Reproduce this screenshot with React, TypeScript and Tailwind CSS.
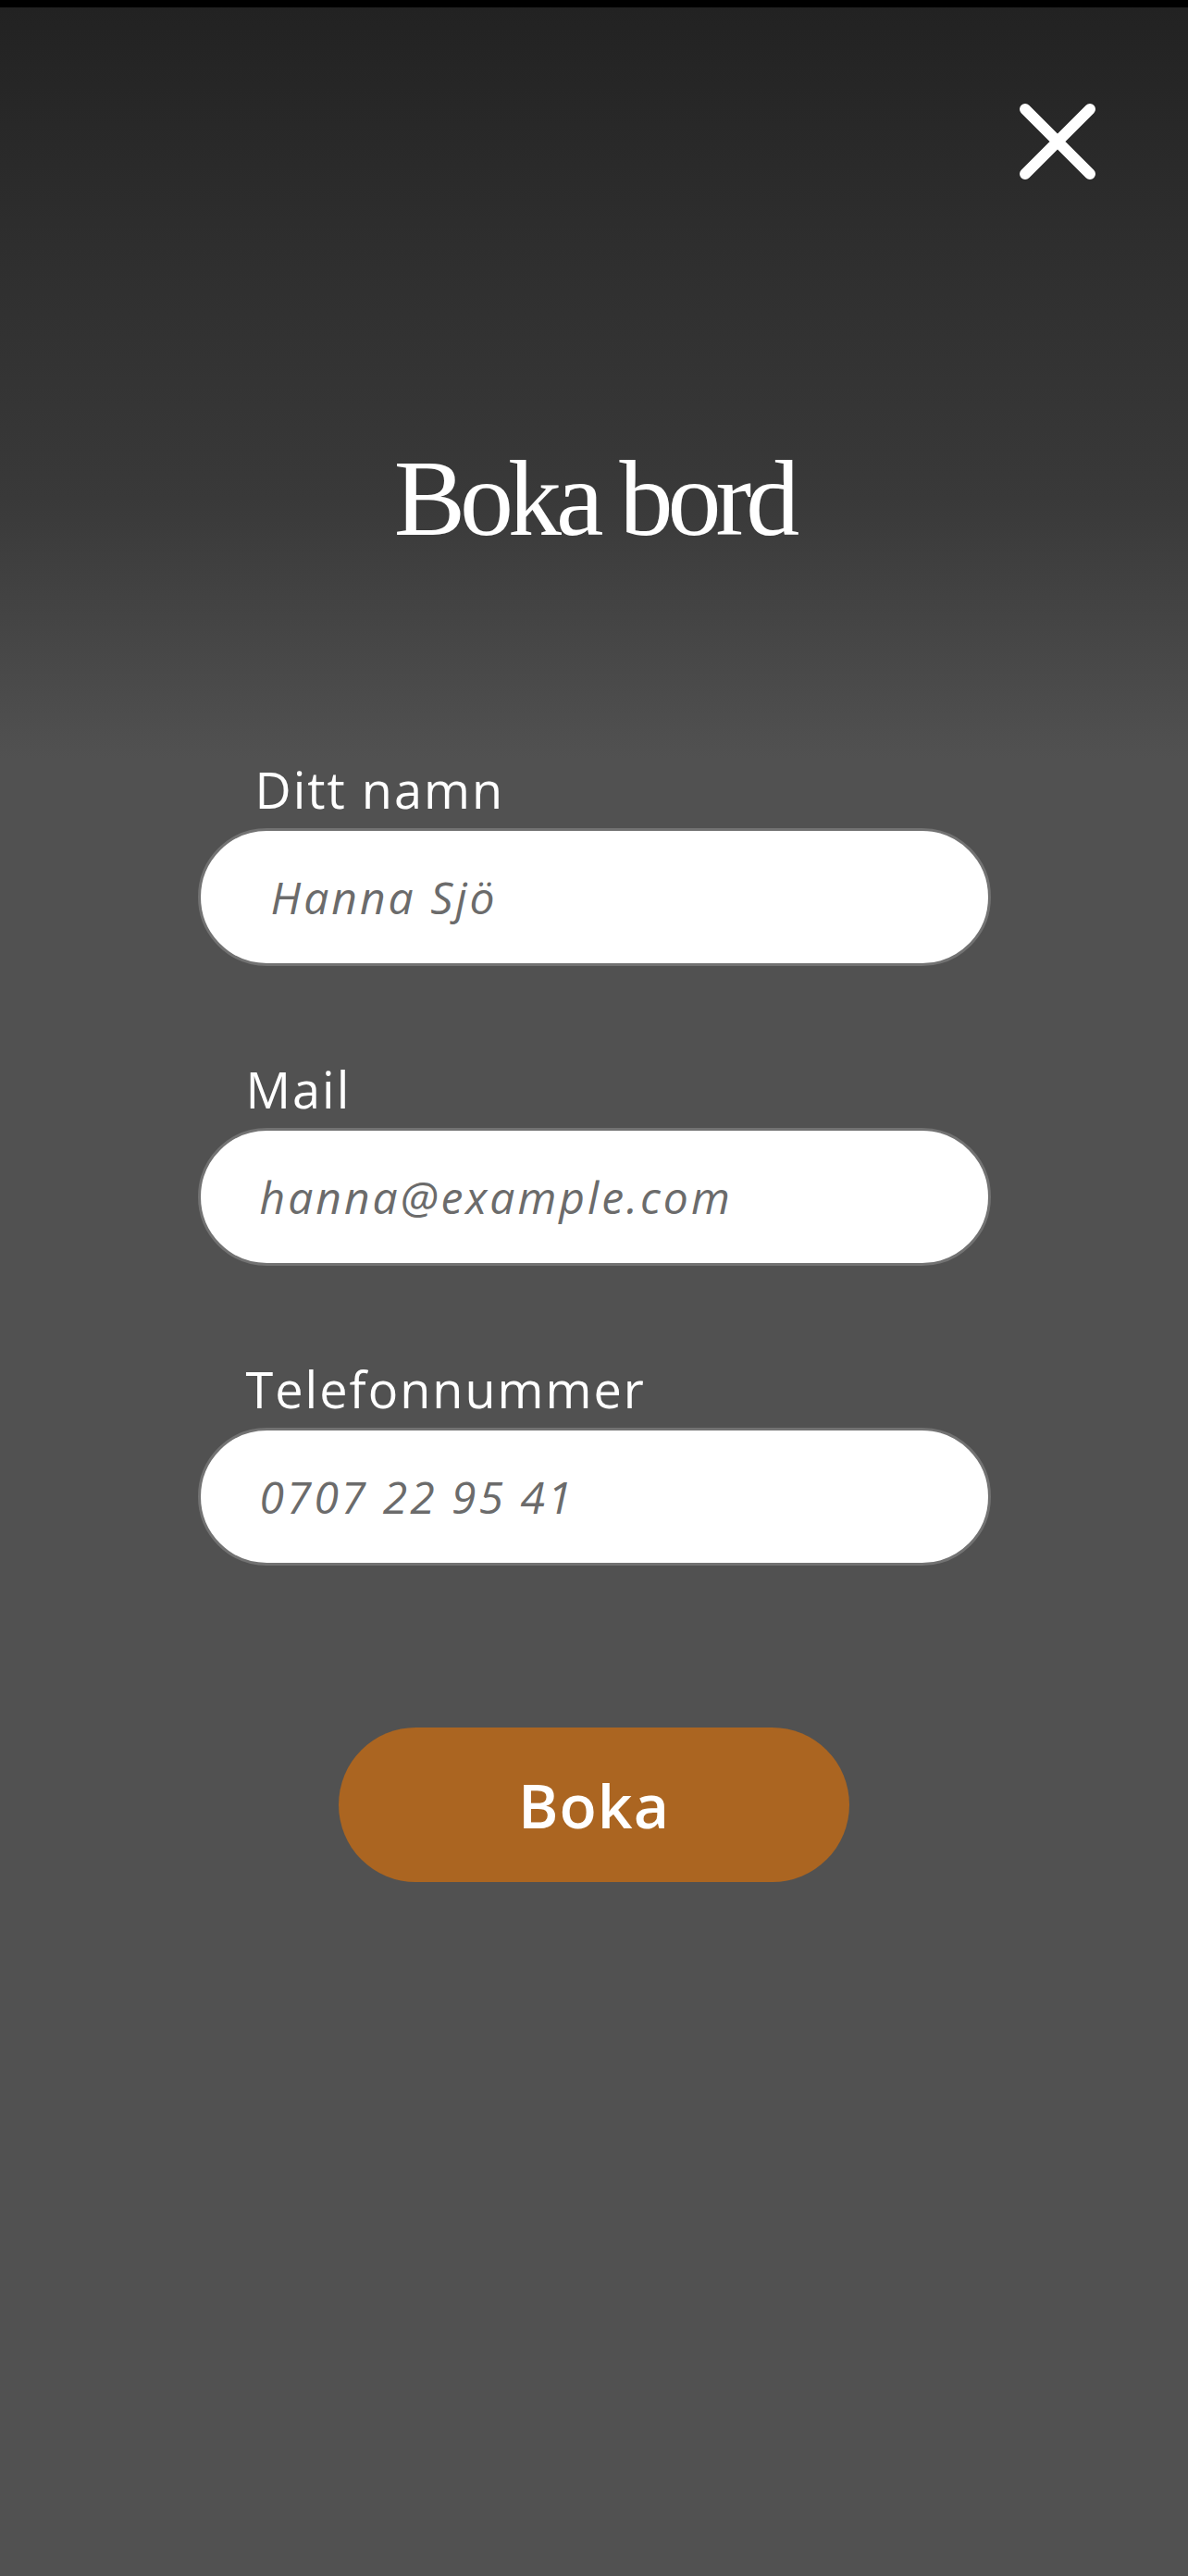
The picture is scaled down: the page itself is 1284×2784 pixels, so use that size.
import { useState } from 'react'

interface FieldProps {
  label: string
  placeholder: string
  type?: string
  labelClass: string
  inputClass: string
}

function Field({ label, placeholder, type = 'text', labelClass, inputClass }: FieldProps) {
  const [value, setValue] = useState('')

  return (
    <label className="flex flex-col">
      <span className={`text-[54px] leading-none font-normal tracking-[2px] text-white ${labelClass}`}>
        {label}
      </span>
      <input
        type={type}
        value={value}
        onChange={(e) => setValue(e.target.value)}
        placeholder={placeholder}
        className={`mt-[15px] h-[149px] w-full rounded-full border-[3px] border-[#727272] bg-white text-[48px] tracking-[3px] text-[#3a3a3a] outline-none placeholder:italic placeholder:text-[#6b6b6b] ${inputClass}`}
      />
    </label>
  )
}

export default function App() {
  return (
    <div className="min-h-[2784px] w-full bg-[#515151] font-['Open_Sans',sans-serif]">
      <div className="h-[8px] bg-black" />
      <div className="bg-[linear-gradient(180deg,#222222_0px,#2d2d2d_232px,#393939_530px,#515151_812px)] pb-[700px]">
        <div className="flex justify-end pt-[95px] pr-[91px]">
          <button type="button" aria-label="Stäng" className="h-[100px] w-[100px]">
            <svg viewBox="0 0 100 100" className="h-[100px] w-[100px]">
              <path
                d="M15 15 L85 85 M85 15 L15 85"
                stroke="white"
                strokeWidth="12"
                strokeLinecap="round"
                fill="none"
              />
            </svg>
          </button>
        </div>

        <h1 className="mt-[278px] text-center font-['Liberation_Serif',serif] text-[116px] leading-none tracking-[-6px] text-white">
          Boka bord
        </h1>

        <form
          className="mx-auto mt-[229px] flex w-[857px] flex-col gap-[106px]"
          onSubmit={(e) => e.preventDefault()}
        >
          <Field label="Ditt namn" placeholder="Hanna Sjö" labelClass="pl-[62px]" inputClass="pl-[76px]" />
          <Field
            label="Mail"
            type="email"
            placeholder="hanna@example.com"
            labelClass="pl-[52px]"
            inputClass="pl-[64px]"
          />
          <Field
            label="Telefonnummer"
            type="tel"
            placeholder="0707 22 95 41"
            labelClass="pl-[52px]"
            inputClass="pl-[64px]"
          />
          <button
            type="submit"
            className="mx-auto mt-[69px] h-[167px] w-[552px] rounded-full bg-[#ab6521] text-[66px] font-semibold tracking-[1px] text-white"
          >
            Boka
          </button>
        </form>
      </div>
    </div>
  )
}
